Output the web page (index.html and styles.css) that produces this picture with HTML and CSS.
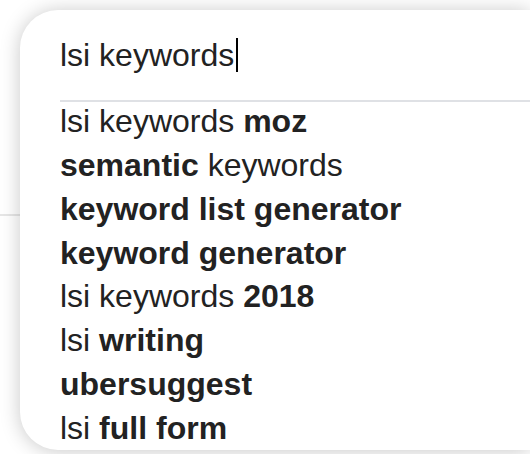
FILE: index.html
```html
<!DOCTYPE html>
<html>
<head>
<meta charset="utf-8">
<link rel="stylesheet" href="styles.css">
</head>
<body>
<div class="page-rule"></div>
<div class="dropdown">
  <div class="query">lsi keywords<span class="caret"></span></div>
  <ul class="suggestions">
    <li>lsi keywords <b>moz</b></li>
    <li><b>semantic</b> keywords</li>
    <li><b>keyword list generator</b></li>
    <li><b>keyword generator</b></li>
    <li>lsi keywords <b>2018</b></li>
    <li>lsi <b>writing</b></li>
    <li><b>ubersuggest</b></li>
    <li>lsi <b>full form</b></li>
  </ul>
</div>
</body>
</html>
```

FILE: styles.css
```css
html, body {
  margin: 0;
  padding: 0;
  background: #fff;
  width: 530px;
  height: 454px;
  overflow: hidden;
}

body {
  position: relative;
  font-family: "Liberation Sans", Arial, sans-serif;
  color: #222;
}

.page-rule {
  margin-top: 214px;
  height: 2px;
  background: #e6e6e6;
}

.dropdown {
  position: absolute;
  left: 20px;
  top: 10px;
  width: 510px;
  height: 440px;
  background: #fff;
  border-radius: 38px 0 0 38px;
  box-shadow: 0 1px 20px rgba(0, 0, 0, 0.22);
  padding-left: 40px;
  box-sizing: border-box;
  overflow: hidden;
}

.query {
  font-size: 32px;
  line-height: 44px;
  padding: 23px 0;
  border-bottom: 2px solid #dfe1e5;
  white-space: nowrap;
}

.caret {
  display: inline-block;
  width: 2px;
  height: 34px;
  background: #000;
  margin-left: 2px;
  vertical-align: -6px;
}

.suggestions {
  list-style: none;
  margin: -2px 0 0 0;
  padding: 0;
  font-size: 32px;
  line-height: 43.86px;
}

.suggestions li {
  white-space: nowrap;
}

.suggestions b {
  font-weight: 700;
}
```
